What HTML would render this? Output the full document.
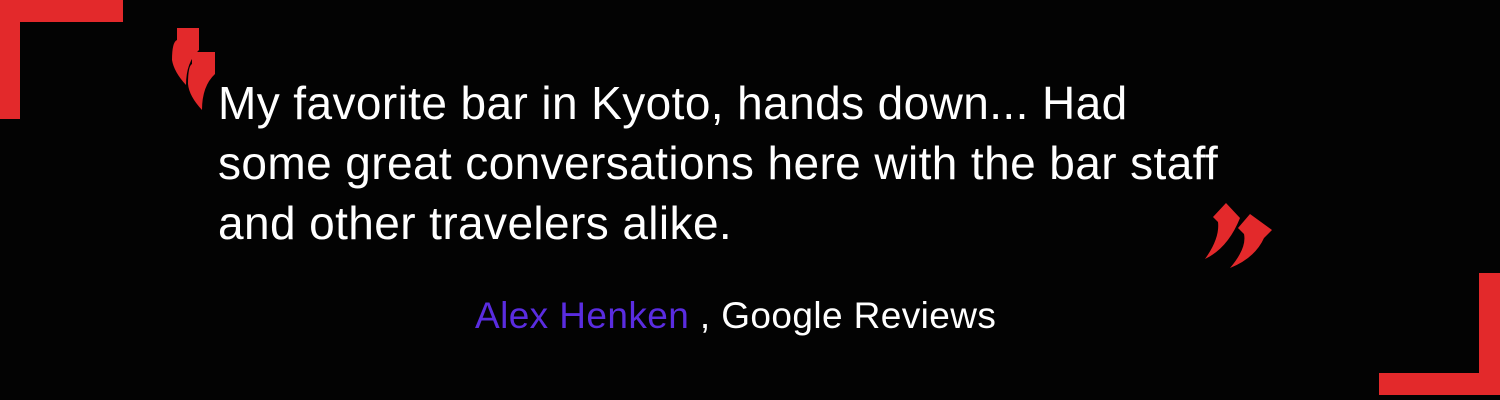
<!DOCTYPE html>
<html><head><style>
html,body{margin:0;padding:0;}
body{width:1500px;height:400px;background:#030303;position:relative;overflow:hidden;font-family:"Liberation Sans",sans-serif;}
.r{position:absolute;background:#e3292b;}
.q{position:absolute;color:#fff;font-size:46px;line-height:60px;left:218px;top:73px;white-space:nowrap;letter-spacing:0.4px;}
.a{position:absolute;left:475px;top:296px;font-size:37px;line-height:40px;color:#fff;white-space:nowrap;letter-spacing:0.4px;}
.a span{color:#5a2ce0;}
</style></head><body>
<div class="r" style="left:0;top:0;width:123px;height:22px"></div>
<div class="r" style="left:0;top:0;width:20px;height:119px"></div>
<div class="r" style="left:1479px;top:273px;width:21px;height:122px"></div>
<div class="r" style="left:1379px;top:373px;width:121px;height:22px"></div>
<svg style="position:absolute;left:0;top:0" width="1500" height="400">
<g fill="#e3292b">
<path d="M177 28 L199 28 L199 50 Q186 62 186 85 Q174 72 172 60 Q172 42 177 40Z"/>
<path d="M192 52 L215 52 L215 74 Q202 86 202 110 Q189 96 188 84 Q188 66 192 64Z"/>
<path d="M1226 203 L1240 218 Q1228 248 1205 259 Q1220 238 1218 222 L1213 217Z"/>
<path d="M1250 214 L1272 230 L1264 238 Q1255 258 1230 268 Q1247 248 1244 234 L1238 228Z"/>
</g>
</svg>
<div class="q">My favorite bar in Kyoto, hands down... Had<br>some great conversations here with the bar staff<br>and other travelers alike.</div>
<div class="a"><span>Alex Henken</span> , Google Reviews</div>
</body></html>
